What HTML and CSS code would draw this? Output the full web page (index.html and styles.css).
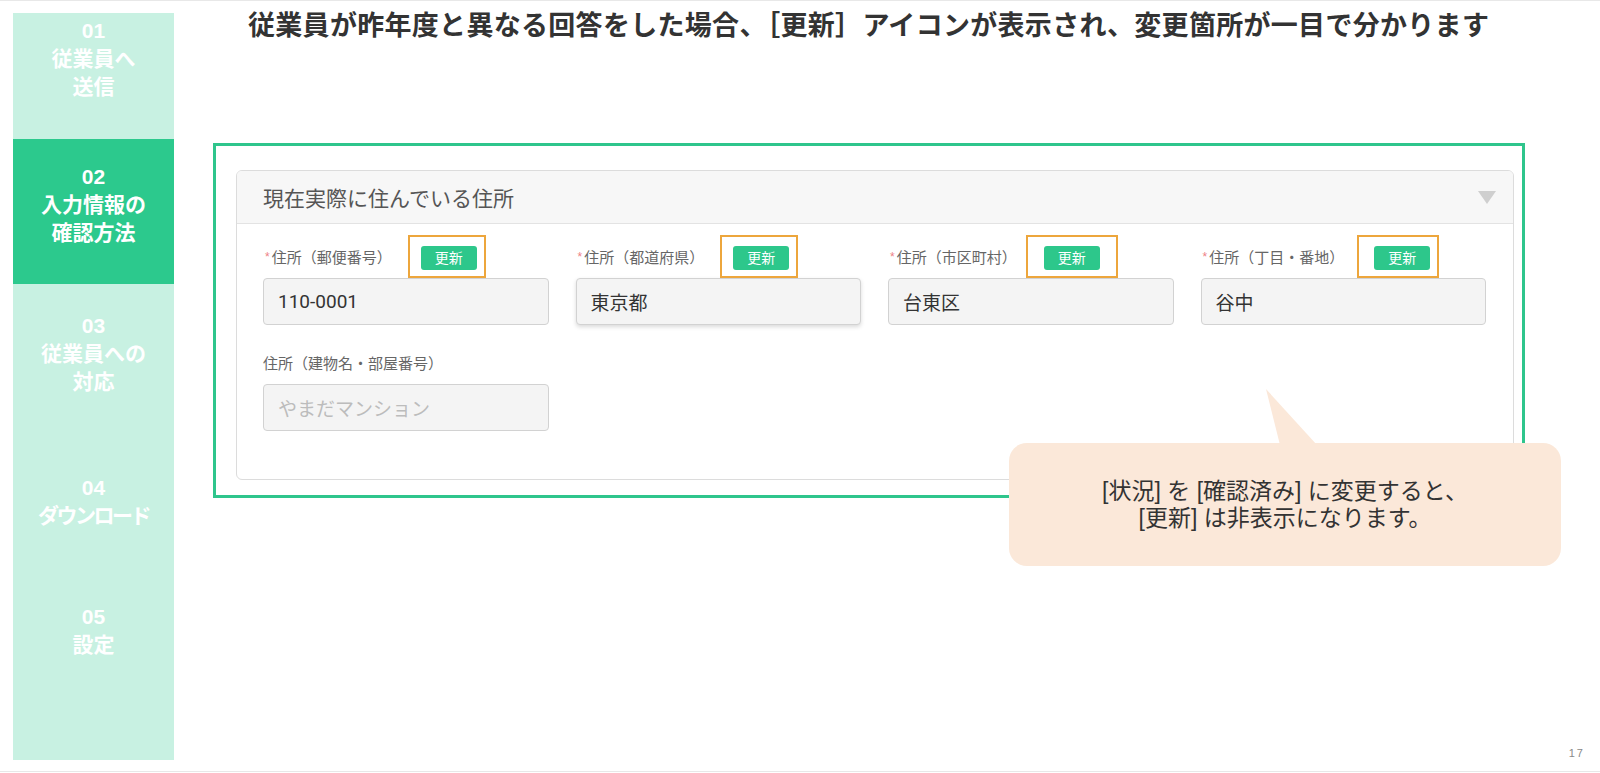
FILE: index.html
```html
<!DOCTYPE html>
<html lang="ja">
<head>
  <meta charset="UTF-8" />
  <title>入力情報の確認方法</title>
  <link rel="stylesheet" href="styles.css">
</head>
<body>
  <div class="slide">
    <nav class="steps">
      <div class="step step-1">01<br>従業員へ<br>送信</div>
      <div class="step step-2 active">02<br>入力情報の<br>確認方法</div>
      <div class="step step-3">03<br>従業員への<br>対応</div>
      <div class="step step-4">04<br><span class="narrow">ダウンロード</span></div>
      <div class="step step-5">05<br>設定</div>
    </nav>

    <main class="content">
      <h1 class="title">従業員が昨年度と異なる回答をした場合、［更新］アイコンが表示され、変更箇所が一目で分かります</h1>

      <div class="frame">
        <section class="panel">
          <div class="panel-head">
            <span>現在実際に住んでいる住所</span>
            <span class="caret"></span>
          </div>
          <div class="panel-body">
            <div class="field">
              <div class="field-label">
                <span class="req">*</span>住所（郵便番号）
                <span class="mark"><span class="badge">更新</span></span>
              </div>
              <div class="input">110-0001</div>
            </div>
            <div class="field">
              <div class="field-label">
                <span class="req">*</span>住所（都道府県）
                <span class="mark"><span class="badge">更新</span></span>
              </div>
              <div class="input focused">東京都</div>
            </div>
            <div class="field">
              <div class="field-label">
                <span class="req">*</span>住所（市区町村）
                <span class="mark mark-wide"><span class="badge">更新</span></span>
              </div>
              <div class="input">台東区</div>
            </div>
            <div class="field">
              <div class="field-label">
                <span class="req">*</span>住所（丁目・番地）
                <span class="mark mark-left"><span class="badge">更新</span></span>
              </div>
              <div class="input">谷中</div>
            </div>
            <div class="field">
              <div class="field-label">住所（建物名・部屋番号）</div>
              <div class="input placeholder">やまだマンション</div>
            </div>
          </div>
        </section>
      </div>
    </main>

    <div class="bubble">
      <span class="bubble-line">[状況] を [確認済み] に変更すると、</span>
      <span class="bubble-line">[更新] は非表示になります。</span>
    </div>

    <div class="page-no">17</div>
  </div>
</body>
</html>
```

FILE: styles.css
```css
body {
  margin: 0;
  padding: 0;
  background: #fff;
  font-family: "Liberation Sans", "Noto Sans CJK JP", sans-serif;
  color: #333;
}
.slide {
  position: relative;
  width: 1600px;
  height: 772px;
  box-sizing: border-box;
  border-top: 1px solid #e8e8e8;
  border-bottom: 1px solid #e8e8e8;
  display: flex;
  overflow: hidden;
}

/* left step menu */
.steps {
  width: 161px;
  height: 747px;
  margin: 12px 0 0 13px;
  background-color: #c8f1e2;
  display: flex;
  flex-direction: column;
}
.step {
  display: flex;
  flex-direction: column;
  justify-content: center;
  text-align: center;
  color: #fff;
  font-weight: bold;
  font-size: 21px;
  line-height: 28px;
  box-sizing: border-box;
  flex-shrink: 0;
}
.step-1 {
  height: 126px;
  padding-bottom: 34px;
}
.step-2,
.step-3,
.step-4 {
  height: 145px;
}
.step-2 {
  padding-bottom: 14px;
}
.step-3 {
  padding-bottom: 6px;
}
.step-5 {
  height: 114px;
}
.step .narrow {
  letter-spacing: -2.5px;
}
.step.active {
  background-color: #2cc98d;
}

/* main area */
.content {
  flex: 1;
  padding-top: 7px;
}
.title {
  margin: 0 0 0 74px;
  font-size: 27px;
  line-height: 36px;
  font-weight: bold;
  letter-spacing: 0.3px;
  color: #333;
  white-space: nowrap;
}
.frame {
  width: 1312px;
  margin: 99px 0 0 39px;
  border: 3px solid #2fc58c;
  padding: 24px 8px 15px 20px;
  box-sizing: border-box;
}
.panel {
  border: 1px solid #dcdcdc;
  border-radius: 6px;
  overflow: hidden;
  background: #fff;
}
.panel-head {
  height: 52px;
  display: flex;
  align-items: center;
  justify-content: space-between;
  padding: 0 17px 0 26px;
  background-color: #f7f7f7;
  border-bottom: 1px solid #e3e3e3;
  font-size: 21px;
  color: #555;
}
.caret {
  width: 0;
  height: 0;
  border-left: 9px solid transparent;
  border-right: 9px solid transparent;
  border-top: 13px solid #cfcfcf;
}
.panel-body {
  display: grid;
  grid-template-columns: repeat(4, 1fr);
  column-gap: 27px;
  row-gap: 16px;
  padding: 11px 27px 48px 26px;
}
.field-label {
  height: 43px;
  display: flex;
  align-items: center;
  font-size: 15px;
  color: #666;
  white-space: nowrap;
}
.req {
  color: #ee7f86;
  font-size: 12px;
  margin: 0 2px 0 2px;
}
.mark {
  display: flex;
  align-self: stretch;
  align-items: flex-start;
  margin-left: 16px;
  padding: 9px 7px 6px 11px;
  border: 2px solid #eda63c;
}
.mark-wide {
  margin-left: 9px;
  padding: 9px 16px 6px 16px;
}
.mark-left {
  margin-left: 13px;
  padding: 9px 7px 6px 15px;
}
.badge {
  display: block;
  width: 56px;
  height: 24px;
  line-height: 24px;
  text-align: center;
  background-color: #2dc78b;
  color: #fff;
  font-size: 14px;
  border-radius: 3px;
}
.input {
  height: 47px;
  box-sizing: border-box;
  display: flex;
  align-items: center;
  padding-left: 14px;
  background-color: #f4f4f4;
  border: 1px solid #d2d2d2;
  border-radius: 4px;
  font-family: Roboto, "Noto Sans CJK JP", sans-serif;
  font-size: 19px;
  color: #333;
}
.input.focused {
  box-shadow: 0 2px 4px rgba(0, 0, 0, 0.15);
}
.input.placeholder {
  color: #bcbcbc;
}

/* speech bubble over the form */
.bubble {
  position: absolute;
  left: 1009px;
  top: 442px;
  width: 552px;
  height: 123px;
  background-color: #fbe8d9;
  border-radius: 18px;
  display: flex;
  flex-direction: column;
  align-items: center;
  justify-content: center;
  font-family: "Liberation Sans", "Noto Sans CJK JP", sans-serif;
  font-size: 23px;
  line-height: 26.5px;
  color: #333;
}
.bubble-line {
  display: block;
  white-space: nowrap;
}
.bubble::before {
  content: "";
  position: absolute;
  left: 255px;
  top: -54px;
  width: 56px;
  height: 56px;
  background-color: #fbe8d9;
  clip-path: polygon(2px 0, 16px 100%, 53px 100%);
}
.page-no {
  position: absolute;
  right: 15px;
  bottom: 12px;
  font-size: 11px;
  letter-spacing: 2px;
  color: #888;
}
```
